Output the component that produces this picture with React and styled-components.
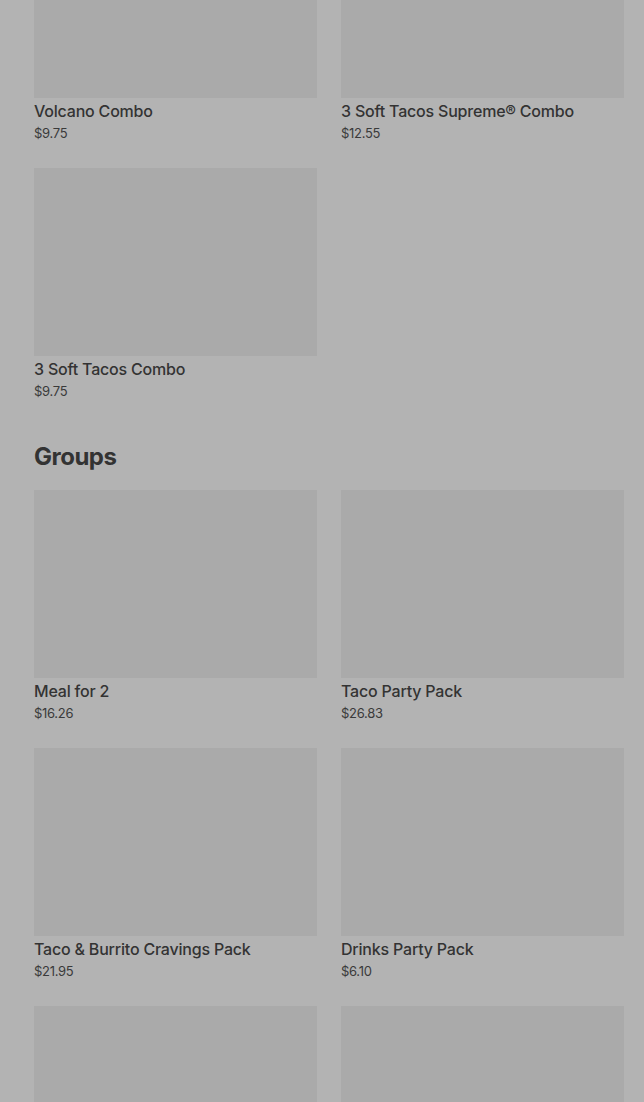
import React from "react";
import styled, { createGlobalStyle } from "styled-components";

const GlobalStyle = createGlobalStyle`
  html, body {
    margin: 0;
    padding: 0;
    background: #b3b3b3;
    overflow: hidden;
  }
  body {
    font-family: Inter, "Liberation Sans", sans-serif;
    color: #333333;
  }
`;

const Page = styled.div`
  width: 644px;
  height: 1102px;
  overflow: hidden;
  background: #b3b3b3;
`;

const Scroller = styled.div`
  margin-top: -90px;
  padding: 0 20px 0 34px;
`;

const Section = styled.section`
  margin-bottom: 39px;
`;

const Heading = styled.h2`
  margin: 0 0 15px;
  font-size: 24px;
  line-height: 36px;
  font-weight: 700;
  letter-spacing: -0.5px;
  color: #333333;
`;

const Grid = styled.div`
  display: grid;
  grid-template-columns: repeat(2, 283px);
  column-gap: 24px;
  row-gap: 26px;
`;

const Card = styled.div`
  display: flex;
  flex-direction: column;
`;

const Thumb = styled.div`
  height: 188px;
  background: #aaaaaa;
`;

const Title = styled.div`
  margin-top: 3px;
  font-size: 16px;
  line-height: 20px;
  font-weight: 500;
  letter-spacing: -0.2px;
  color: #333333;
`;

const Price = styled.div`
  margin-top: 3px;
  font-size: 13px;
  line-height: 18px;
  letter-spacing: -0.3px;
  color: #3a3a3a;
`;

const combos = [
  { name: "Volcano Combo", price: "$9.75" },
  { name: "3 Soft Tacos Supreme® Combo", price: "$12.55" },
  { name: "3 Soft Tacos Combo", price: "$9.75" },
];

const groups = [
  { name: "Meal for 2", price: "$16.26" },
  { name: "Taco Party Pack", price: "$26.83" },
  { name: "Taco & Burrito Cravings Pack", price: "$21.95" },
  { name: "Drinks Party Pack", price: "$6.10" },
  { id: "g5" },
  { id: "g6" },
];

const Item = ({ name, price }) => (
  <Card>
    <Thumb />
    {name && <Title>{name}</Title>}
    {price && <Price>{price}</Price>}
  </Card>
);

export default function App() {
  return (
    <Page>
      <GlobalStyle />
      <Scroller>
        <Section>
          <Grid>
            {combos.map((c) => (
              <Item key={c.name} {...c} />
            ))}
          </Grid>
        </Section>
        <Section>
          <Heading>Groups</Heading>
          <Grid>
            {groups.map((c) => (
              <Item key={c.name || c.id} {...c} />
            ))}
          </Grid>
        </Section>
      </Scroller>
    </Page>
  );
}
